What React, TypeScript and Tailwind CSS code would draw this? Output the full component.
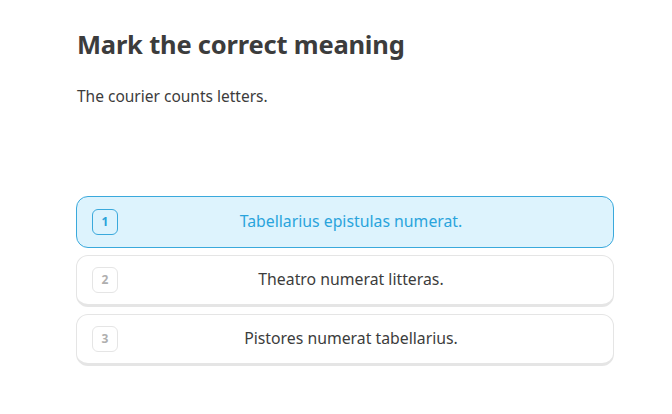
import React from "react";

const OPTIONS = [
  { n: 1, text: "Tabellarius epistulas numerat.", selected: true },
  { n: 2, text: "Theatro numerat litteras.", selected: false },
  { n: 3, text: "Pistores numerat tabellarius.", selected: false },
];

export default function App() {
  return (
    <div
      className="w-[672px] h-[414px] bg-white text-[#3c3c3c]"
      style={{ fontFamily: '"Noto Sans", Lato, sans-serif' }}
    >
      <div className="pl-[77px] pr-[58px] pt-[26px]">
        <h1 className="text-[25.5px] font-bold leading-[36px] text-[#3c3c3c] tracking-[-0.2px]">
          Mark the correct meaning
        </h1>
        <p className="mt-[24px] text-[15.5px] leading-[20px] text-[#3c3c3c]">
          The courier counts letters.
        </p>

        {/* Options */}
        <div className="mt-[90px] -ml-px flex flex-col gap-[7px]">
          {OPTIONS.map((o) => (
            <div
              key={o.n}
              className={`h-[52px] rounded-[12px] border flex items-center px-[15px] ${
                o.selected
                  ? "bg-[#ddf3fd] border-[#3aa9dc]"
                  : "bg-white border-[#e5e5e5] border-b-[3px]"
              }`}
            >
              <div
                className={`w-[26px] h-[26px] rounded-[6px] border flex items-center justify-center text-[12px] font-bold ${
                  o.selected
                    ? "border-[#3aa9dc] text-[#2ba3d9]"
                    : "border-[#e5e5e5] text-[#afafaf]"
                }`}
              >
                {o.n}
              </div>
              <div
                className={`flex-1 text-center text-[15.8px] pr-[14px] ${
                  o.selected ? "text-[#2aa4dc]" : "text-[#3c3c3c]"
                }`}
              >
                {o.text}
              </div>
            </div>
          ))}
        </div>
      </div>
    </div>
  );
}
